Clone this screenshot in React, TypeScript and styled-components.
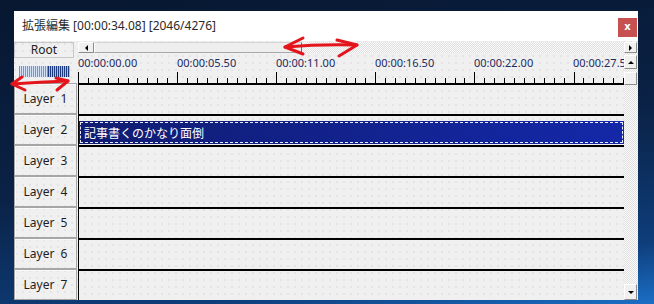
import React from "react";
import styled, { createGlobalStyle, css } from "styled-components";

// timeline scale: one major tick per 5.5 sec, 10 minor ticks between
const TICK = 9.91;
const TIMELINE_W = 546;
const labels = ["00:00:00.00", "00:00:05.50", "00:00:11.00", "00:00:16.50", "00:00:22.00", "00:00:27.50"];
const layers = [1, 2, 3, 4, 5, 6, 7];

const GlobalStyle = createGlobalStyle`
  html, body {
    margin: 0;
    padding: 0;
  }
  body {
    width: 654px;
    height: 304px;
    overflow: hidden;
    background: linear-gradient(172deg, #071730 0%, #0a2246 50%, #0e3d7a 84%, #1b6fc6 100%);
    font-family: "Noto Sans", "Noto Sans CJK JP", sans-serif;
  }
`;

const dotted = css`
  background-color: #f0f0f0;
  background-image: radial-gradient(circle at 1px 1px, #e0e0e0 0.6px, transparent 1px);
  background-size: 7px 7px;
`;

const checker = css`
  background: repeating-conic-gradient(#e0e0e0 0% 25%, #fafafa 0% 50%) 0 0 / 2px 2px;
`;

function App() {
  return (
    <Desktop>
      <GlobalStyle />
      <Window>
        <TitleBar>
          <Title>拡張編集 [00:00:34.08] [2046/4276]</Title>
          <CloseButton>x</CloseButton>
        </TitleBar>

        <Body>
          <LeftPanel>
            <RootButton>Root</RootButton>
            <MeterArea>
              <Meter>
                <MeterLight />
                <MeterDark />
              </Meter>
            </MeterArea>
            {layers.map((n) => (
              <LayerHeader key={n}>{`Layer  ${n}`}</LayerHeader>
            ))}
          </LeftPanel>

          <RightPanel>
            <HScroll>
              <ScrollButton $w={16} $h={11}>
                <Arrow $dir="left" />
              </ScrollButton>
              <HThumb />
              <HTrack />
              <ScrollButton $w={13} $h={11}>
                <Arrow $dir="right" />
              </ScrollButton>
            </HScroll>

            <Main>
              <Timeline>
                <Ruler>
                  <LabelRow>
                    {labels.map((l) => (
                      <TimeLabel key={l}>{l}</TimeLabel>
                    ))}
                  </LabelRow>
                  <Ticks />
                </Ruler>
                {layers.map((n) => (
                  <Lane key={n}>{n === 2 && <Clip>記事書くのかなり面倒</Clip>}</Lane>
                ))}
              </Timeline>

              <VScroll>
                <ScrollButton $w={13} $h={14} style={{ marginTop: 2 }}>
                  <Arrow $dir="up" />
                </ScrollButton>
                <VThumb />
                <VTrack />
                <ScrollButton $w={13} $h={16}>
                  <Arrow $dir="down" />
                </ScrollButton>
              </VScroll>
            </Main>
          </RightPanel>
        </Body>
      </Window>
      <Annotations />
    </Desktop>
  );
}

function Ticks() {
  const lines = [];
  for (let i = 0; i * TICK < TIMELINE_W; i++) {
    const x = Math.round(i * TICK) + 0.5;
    const major = i % 10 === 0;
    lines.push(<line key={i} x1={x} x2={x} y1={major ? 0 : 6} y2={11} stroke="#000" strokeWidth={1} />);
  }
  return (
    <TickSvg width={TIMELINE_W} height={11}>
      {lines}
    </TickSvg>
  );
}

// hand drawn red arrows sitting on top of the screenshot
function Annotations() {
  return (
    <Overlay width={654} height={304}>
      <g fill="none" stroke="#e3141b" strokeWidth={3} strokeLinecap="round" strokeLinejoin="round">
        <path d="M12 84 Q40 82 68 81" />
        <path d="M22 77 L12 84 L25 90" />
        <path d="M56 78 L68 81 L57 90" />
        <path d="M285 47 Q320 44 357 45" />
        <path d="M303 38 L285 47 L303 54" />
        <path d="M337 40 L357 45 L339 56" />
      </g>
    </Overlay>
  );
}

const Desktop = styled.div`
  position: relative;
  box-sizing: border-box;
  width: 654px;
  height: 304px;
  padding: 11px 0 0 14px;
`;

const Window = styled.div`
  width: 624px;
  height: 289px;
  display: flex;
  flex-direction: column;
  background: #fff;
  overflow: hidden;
`;

const TitleBar = styled.div`
  height: 30px;
  flex-shrink: 0;
  display: flex;
  align-items: center;
  justify-content: space-between;
  padding-left: 8px;
  padding-right: 1px;
  background: #fff;
`;

const Title = styled.span`
  font-family: "Noto Sans", "Noto Sans CJK JP", sans-serif;
  font-size: 12px;
  color: #2a2a2a;
  margin-top: -2px;
`;

const CloseButton = styled.div`
  width: 19px;
  height: 19px;
  margin-top: 3px;
  background: #c75050;
  color: #fff;
  font-family: "DejaVu Sans", sans-serif;
  font-size: 10px;
  font-weight: 700;
  line-height: 18px;
  text-align: center;
`;

const Body = styled.div`
  flex: 1;
  display: flex;
  ${dotted};
`;

const LeftPanel = styled.div`
  width: 64px;
  flex-shrink: 0;
  display: flex;
  flex-direction: column;
`;

const RootButton = styled.div`
  box-sizing: border-box;
  width: 60px;
  height: 16px;
  margin-top: 1px;
  border: 1px solid #c8c8c8;
  font-size: 12px;
  line-height: 14px;
  color: #222;
  text-align: center;
  ${dotted};
`;

const MeterArea = styled.div`
  height: 25px;
  flex-shrink: 0;
  padding: 8px 0 0 5px;
  box-sizing: border-box;
`;

const Meter = styled.div`
  width: 51px;
  height: 11px;
  display: flex;
`;

const MeterLight = styled.div`
  width: 29px;
  background: repeating-linear-gradient(90deg, #6a98df 0 1px, #d6e2f5 1px 2px);
`;

const MeterDark = styled.div`
  flex: 1;
  background: repeating-linear-gradient(90deg, #1c3a7c 0 1px, #b0bdd6 1px 2px);
`;

const LayerHeader = styled.div`
  box-sizing: border-box;
  width: 63px;
  height: 31px;
  flex-shrink: 0;
  border: 1px solid #a6a6a6;
  box-shadow: inset 1px 1px 0 #fafafa;
  display: flex;
  align-items: center;
  justify-content: center;
  white-space: pre;
  font-size: 12px;
  color: #1e1e1e;
  ${dotted};
`;

const RightPanel = styled.div`
  flex: 1;
  display: flex;
  flex-direction: column;
`;

const HScroll = styled.div`
  height: 11px;
  margin-top: 1px;
  padding-right: 1px;
  display: flex;
  flex-shrink: 0;
`;

const ScrollButton = styled.div<{ $w: number; $h: number }>`
  box-sizing: border-box;
  width: ${(p) => p.$w}px;
  height: ${(p) => p.$h}px;
  flex-shrink: 0;
  background: #f0f0f0;
  border: 1px solid;
  border-color: #fff #8c8c8c #8c8c8c #fff;
  display: flex;
  align-items: center;
  justify-content: center;
`;

const Arrow = styled.div<{ $dir: "left" | "right" | "up" | "down" }>`
  width: 0;
  height: 0;
  border-style: solid;
  ${(p) =>
    p.$dir === "left"
      ? "border-width: 3px 3px 3px 0; border-color: transparent #000 transparent transparent;"
      : p.$dir === "right"
      ? "border-width: 3px 0 3px 3px; border-color: transparent transparent transparent #000;"
      : p.$dir === "up"
      ? "border-width: 0 3px 3px 3px; border-color: transparent transparent #000 transparent;"
      : "border-width: 3px 3px 0 3px; border-color: #000 transparent transparent transparent;"}
`;

const HThumb = styled.div`
  box-sizing: border-box;
  width: 208px;
  border: 1px solid;
  border-color: #d4d4d4 #6a6a6a #a8a8a8 #fff;
  background: #eeeeee;
`;

const HTrack = styled.div`
  flex: 1;
  ${checker};
`;

const Main = styled.div`
  flex: 1;
  display: flex;
`;

const Timeline = styled.div`
  width: ${TIMELINE_W}px;
  display: flex;
  flex-direction: column;
  overflow: hidden;
`;

const Ruler = styled.div`
  height: 30px;
  flex-shrink: 0;
  box-sizing: border-box;
  padding-top: 3px;
`;

const LabelRow = styled.div`
  display: flex;
  height: 13px;
  margin-bottom: 3px;
  overflow: hidden;
`;

const TimeLabel = styled.span`
  width: 99px;
  flex-shrink: 0;
  font-size: 11px;
  line-height: 13px;
  color: #1d2b5e;
  white-space: nowrap;
`;

const TickSvg = styled.svg`
  display: block;
`;

const Lane = styled.div`
  box-sizing: border-box;
  height: 31px;
  flex-shrink: 0;
  border-top: 2px solid #000;
  border-left: 1px solid #000;
`;

const Clip = styled.div`
  box-sizing: border-box;
  height: 23px;
  margin-top: 5px;
  padding-left: 5px;
  background: linear-gradient(90deg, #101c72, #1428a8);
  outline: 1px dashed rgba(255, 255, 255, 0.9);
  outline-offset: -2px;
  font-family: "Noto Sans CJK JP", sans-serif;
  font-size: 12px;
  line-height: 23px;
  color: #fff;
  white-space: nowrap;
`;

const VScroll = styled.div`
  width: 14px;
  padding-right: 1px;
  box-sizing: border-box;
  display: flex;
  flex-direction: column;
  ${checker};
`;

const VThumb = styled.div`
  box-sizing: border-box;
  height: 13px;
  margin-top: 3px;
  border: 1px solid;
  border-color: #fff #8c8c8c #8c8c8c #fff;
  background: #f0f0f0;
`;

const VTrack = styled.div`
  flex: 1;
`;

const Overlay = styled.svg`
  position: absolute;
  top: 0;
  left: 0;
  pointer-events: none;
`;

export default App;
